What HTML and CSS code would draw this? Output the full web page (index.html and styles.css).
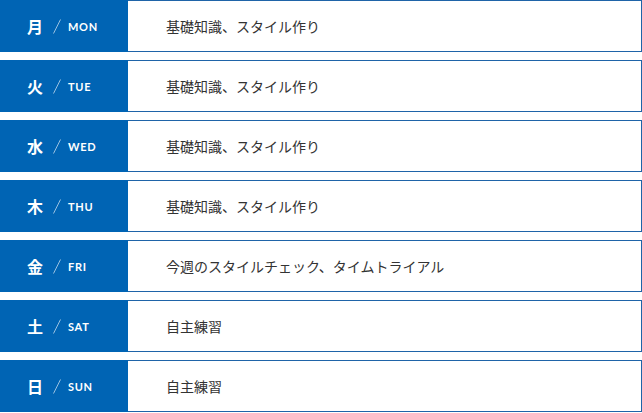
FILE: index.html
```html
<!DOCTYPE html>
<html lang="ja">
<head>
<meta charset="utf-8">
<link rel="stylesheet" href="styles.css">
</head>
<body>
<ul class="schedule">
  <li class="row"><div class="day"><span class="jp">月</span><svg class="sep" viewBox="0 0 8 15" width="8" height="15"><line x1="0.5" y1="14.5" x2="7.5" y2="0.5"/></svg><span class="en">MON</span></div><div class="desc">基礎知識、スタイル作り</div></li>
  <li class="row"><div class="day"><span class="jp">火</span><svg class="sep" viewBox="0 0 8 15" width="8" height="15"><line x1="0.5" y1="14.5" x2="7.5" y2="0.5"/></svg><span class="en">TUE</span></div><div class="desc">基礎知識、スタイル作り</div></li>
  <li class="row"><div class="day"><span class="jp">水</span><svg class="sep" viewBox="0 0 8 15" width="8" height="15"><line x1="0.5" y1="14.5" x2="7.5" y2="0.5"/></svg><span class="en">WED</span></div><div class="desc">基礎知識、スタイル作り</div></li>
  <li class="row"><div class="day"><span class="jp">木</span><svg class="sep" viewBox="0 0 8 15" width="8" height="15"><line x1="0.5" y1="14.5" x2="7.5" y2="0.5"/></svg><span class="en">THU</span></div><div class="desc">基礎知識、スタイル作り</div></li>
  <li class="row"><div class="day"><span class="jp">金</span><svg class="sep" viewBox="0 0 8 15" width="8" height="15"><line x1="0.5" y1="14.5" x2="7.5" y2="0.5"/></svg><span class="en">FRI</span></div><div class="desc">今週のスタイルチェック、タイムトライアル</div></li>
  <li class="row"><div class="day"><span class="jp">土</span><svg class="sep" viewBox="0 0 8 15" width="8" height="15"><line x1="0.5" y1="14.5" x2="7.5" y2="0.5"/></svg><span class="en">SAT</span></div><div class="desc">自主練習</div></li>
  <li class="row"><div class="day"><span class="jp">日</span><svg class="sep" viewBox="0 0 8 15" width="8" height="15"><line x1="0.5" y1="14.5" x2="7.5" y2="0.5"/></svg><span class="en">SUN</span></div><div class="desc">自主練習</div></li>
</ul>
</body>
</html>
```

FILE: styles.css
```css
html, body {
  margin: 0;
  padding: 0;
  background: #fff;
}
.schedule {
  list-style: none;
  margin: 0;
  padding: 0;
  width: 642px;
  display: flex;
  flex-direction: column;
  gap: 8px;
}
.row {
  display: flex;
  height: 52px;
}
.day {
  width: 128px;
  flex: none;
  background: #0064b4;
  color: #fff;
  display: flex;
  align-items: center;
  padding-left: 27px;
  box-sizing: border-box;
}
.jp {
  font-family: "Noto Sans CJK JP", sans-serif;
  font-weight: 700;
  font-size: 16px;
  line-height: 1;
}
.sep {
  display: block;
  margin-left: 10px;
  margin-right: 7px;
  margin-top: 1px;
  stroke: rgba(255,255,255,0.6);
  stroke-width: 1;
  fill: none;
}
.en {
  font-family: Lato, "Liberation Sans", sans-serif;
  font-weight: 700;
  font-size: 11px;
  letter-spacing: 0.7px;
}
.desc {
  flex: 1;
  border: 1px solid #1f64a8;
  border-left: none;
  box-sizing: border-box;
  display: flex;
  align-items: center;
  padding-left: 38px;
  font-family: "Noto Sans CJK JP", sans-serif;
  font-size: 14px;
  color: #333;
}
```
